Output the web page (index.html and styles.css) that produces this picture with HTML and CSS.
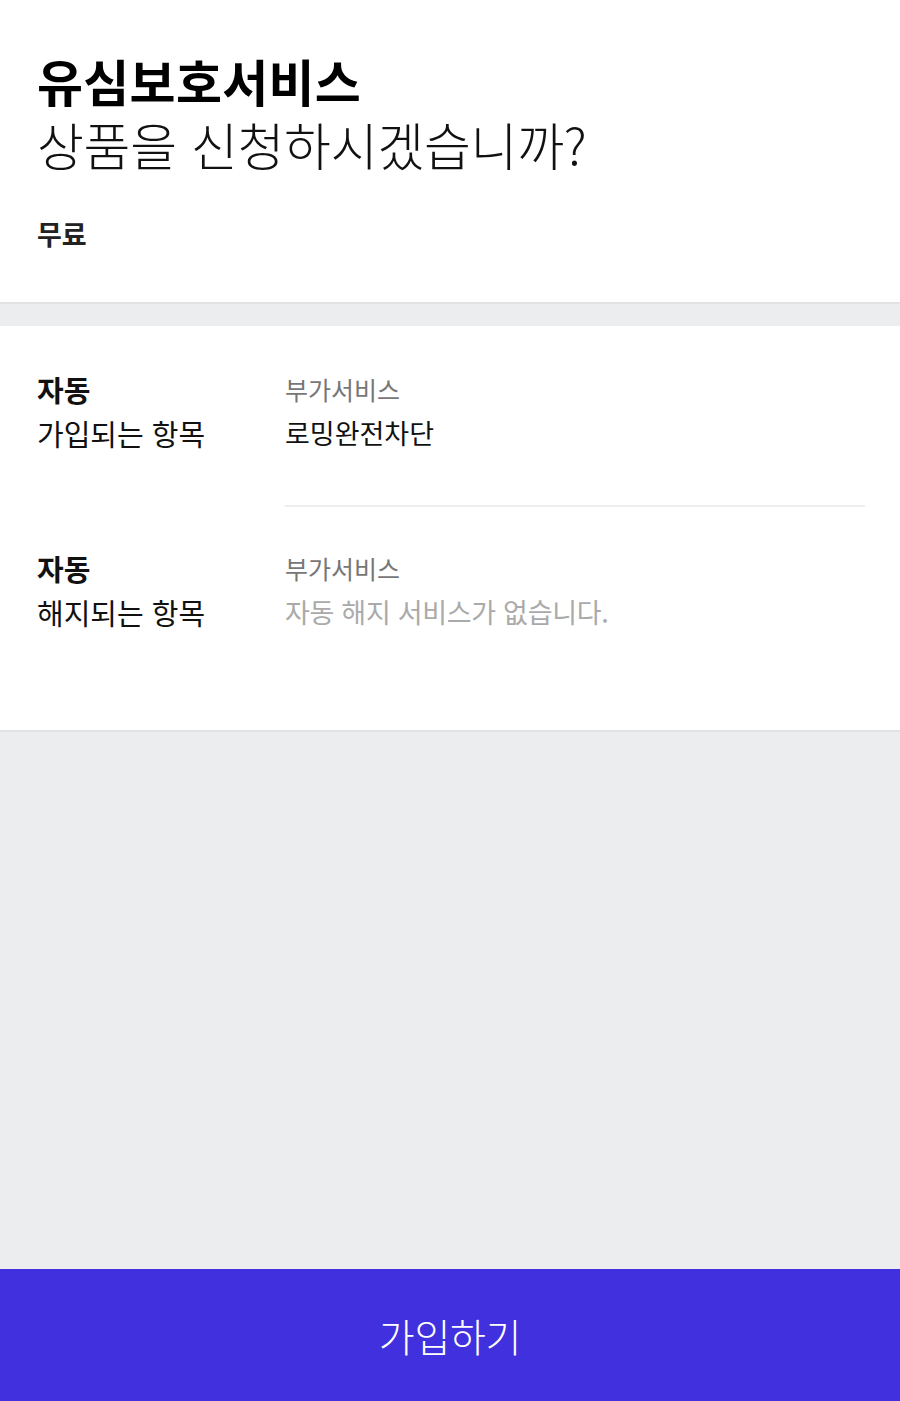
FILE: index.html
```html
<!DOCTYPE html>
<html lang="ko">
<head>
<meta charset="utf-8">
<title>유심보호서비스</title>
<link rel="stylesheet" href="styles.css">
</head>
<body>
<div class="page">
  <header class="head">
    <h1 class="title">유심보호서비스</h1>
    <p class="subtitle">상품을 신청하시겠습니까?</p>
    <p class="price">무료</p>
  </header>
  <div class="gap"></div>
  <section class="items">
    <div class="label"><strong>자동</strong><span>가입되는 항목</span></div>
    <div class="value"><span class="cat">부가서비스</span><span class="name">로밍완전차단</span></div>
    <div class="sep"></div>
    <div class="label"><strong>자동</strong><span>해지되는 항목</span></div>
    <div class="value"><span class="cat">부가서비스</span><span class="name empty">자동 해지 서비스가 없습니다.</span></div>
  </section>
  <div class="fill"></div>
  <button class="cta" type="button">가입하기</button>
</div>
</body>
</html>
```

FILE: styles.css
```css
* { box-sizing: border-box; }
html, body { margin: 0; padding: 0; }
body {
  font-family: "Noto Sans CJK KR", "Noto Sans", sans-serif;
  color: #111;
  background: #ecedef;
}
.page {
  display: flex;
  flex-direction: column;
  min-height: 1401px;
}
.head {
  background: #fff;
  padding: 48px 37px 50px;
  border-bottom: 2px solid #e1e2e4;
}
.title {
  margin: 0;
  font-size: 50px;
  line-height: 64px;
  font-weight: 700;
  color: #000;
  letter-spacing: 0.3px;
}
.subtitle {
  margin: 0;
  font-size: 51px;
  line-height: 64px;
  font-weight: 300;
  color: #111;
  letter-spacing: -0.3px;
}
.price {
  margin: 40px 0 0;
  font-size: 27px;
  line-height: 36px;
  font-weight: 700;
  color: #222;
}
.gap { height: 22px; }
.items {
  background: #fff;
  display: grid;
  grid-template-columns: 248px 1fr;
  padding: 0 35px 46px 37px;
  border-bottom: 2px solid #e1e2e4;
}
.label, .value {
  display: flex;
  flex-direction: column;
  padding: 41px 0 50px;
}
.label strong {
  font-size: 29px;
  line-height: 44px;
  font-weight: 700;
  color: #111;
}
.label span {
  font-size: 29px;
  line-height: 44px;
  font-weight: 400;
  color: #111;
}
.value .cat {
  font-size: 25px;
  line-height: 44px;
  color: #777;
}
.value .name {
  font-size: 27px;
  line-height: 44px;
  color: #111;
}
.value .name.empty {
  color: #aaa;
  letter-spacing: -0.3px;
}
.sep {
  grid-column: 2;
  height: 2px;
  background: #eeeeee;
}
.sep + .label, .sep + .label + .value { padding-top: 39px; }
.fill { flex: 1; }
.cta {
  height: 132px;
  border: 0;
  margin: 0;
  width: 100%;
  background: #4130de;
  color: #fff;
  font-family: inherit;
  font-size: 39px;
  font-weight: 300;
  letter-spacing: -0.3px;
}
```
